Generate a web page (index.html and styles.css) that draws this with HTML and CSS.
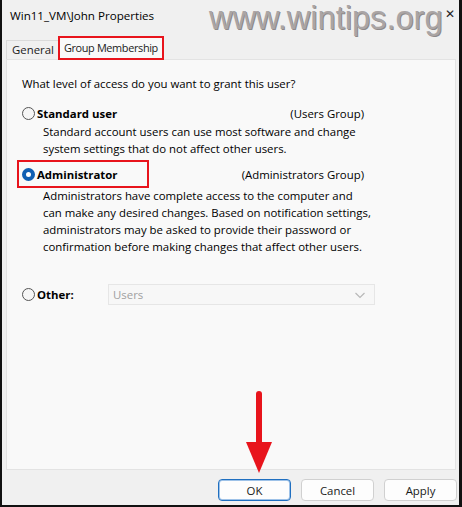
FILE: index.html
```html
<!DOCTYPE html>
<html lang="en">
  <head>
    <meta charset="UTF-8" />
    <title>Win11_VM\John Properties</title>
    <link rel="stylesheet" href="styles.css">
  </head>
  <body>
    <div class="vindue">
      <header class="titel">
        <span class="titeltekst">Win11_VM\John Properties</span>
        <span class="vandmaerke">www.wintips.org</span>
        <span class="luk">&#x2715;</span>
      </header>

      <nav class="faner">
        <span class="fane">General</span>
        <span class="fane aktiv markeret">Group Membership</span>
      </nav>

      <main class="panel">
        <p class="spoergsmaal">What level of access do you want to grant this user?</p>

        <div class="valg">
          <label class="linje">
            <span class="radio"></span>
            <b>Standard user</b>
            <span class="gruppe">(Users Group)</span>
          </label>
          <p class="beskrivelse">Standard account users can use most software and change<br>system settings that do not affect other users.</p>
        </div>

        <div class="valg admin">
          <label class="linje">
            <span class="markering">
              <span class="radio valgt"></span>
              <b>Administrator</b>
            </span>
            <span class="gruppe">(Administrators Group)</span>
          </label>
          <p class="beskrivelse">Administrators have complete access to the computer and<br>can make any desired changes. Based on notification settings,<br>administrators may be asked to provide their password or<br>confirmation before making changes that affect other users.</p>
        </div>

        <div class="valg andet">
          <label class="linje">
            <span class="radio"></span>
            <b>Other:</b>
          </label>
          <div class="vaelger">
            <span>Users</span>
            <svg width="12" height="8" viewBox="0 0 12 8"><path d="M1.5 2 L6 6.5 L10.5 2" fill="none" stroke="#b8b8b8" stroke-width="1.2"/></svg>
          </div>
        </div>
      </main>

      <footer class="knapper">
        <button class="standard">OK</button>
        <button>Cancel</button>
        <button>Apply</button>
      </footer>

      <!-- den roede pil ovenpaa OK -->
      <svg class="pil" width="30" height="84" viewBox="0 0 30 84">
        <path d="M15 3 L15 54" stroke="#e8141c" stroke-width="6" stroke-linecap="round"/>
        <path d="M2 51 L28 51 L15 82 Z" fill="#e8141c"/>
      </svg>
    </div>
  </body>
</html>
```

FILE: styles.css
```css
* {
  padding: 0;
  margin: 0;
  box-sizing: border-box;
}

body {
  background-color: #000;
  font-family: "Open Sans", "Noto Sans", sans-serif;
  font-size: 11.4px;
  color: #000;
}

.vindue {
  position: relative;
  width: 462px;
  height: 507px;
  background-color: #f0f0f0;
  border-left: 2px solid #111;
  border-right: 3px solid #111;
  border-bottom: 2px solid #111;
  display: flex;
  flex-direction: column;
  overflow: hidden;
}

/* titellinje */

.titel {
  height: 37px;
  display: flex;
  align-items: flex-start;
  padding-left: 8px;
  position: relative;
}

.titeltekst {
  margin-top: 8px;
  font-size: 11.6px;
}

.vandmaerke {
  position: absolute;
  left: 207px;
  top: 0;
  line-height: 36px;
  font-family: "Liberation Sans", Arial, sans-serif;
  font-size: 32.6px;
  color: #aaa5a5;
  text-shadow: 1px 1px 0 #8e8a8a;
}

.luk {
  position: absolute;
  right: 4px;
  top: 5px;
  font-size: 12px;
  color: #222;
}

/* faner */

.faner {
  display: flex;
  align-items: flex-end;
  padding-left: 4px;
  height: 22px;
  position: relative;
  z-index: 1;
}

.fane {
  padding: 0 5px;
  height: 19px;
  line-height: 18px;
  border: 1px solid #dadada;
  border-bottom: none;
  background-color: #f0f0f0;
  color: #1a1a1a;
}

.fane.aktiv {
  height: 22px;
  line-height: 19px;
  margin-left: -1px;
  background-color: #f9f9f9;
  padding: 0 4px 0 4px;
  font-size: 10.9px;
  letter-spacing: -0.35px;
}

.markeret {
  outline: 2px solid #e8141c;
  outline-offset: -1px;
}

/* panel */

.panel {
  margin: 0 3px 0 4px;
  height: 411px;
  background-color: #f9f9f9;
  border: 1px solid #e3e3e3;
  padding: 15px 0 0 15px;
  line-height: 17px;
}

.spoergsmaal {
  margin-bottom: 12px;
}

.valg {
  width: 344px;
}

.linje {
  display: flex;
  align-items: center;
  height: 18px;
}

.linje b {
  font-weight: 700;
  margin-left: 2px;
}

.radio {
  width: 13px;
  height: 13px;
  border-radius: 50%;
  border: 1px solid #555;
  background-color: #f6f6f6;
  display: inline-block;
}

.radio.valgt {
  border: 4px solid #0f5fb3;
  background-color: #fff;
}

.gruppe {
  margin-left: auto;
  margin-right: 2px;
}

.beskrivelse {
  padding-left: 21px;
  margin-top: 1px;
  white-space: nowrap;
}

.admin {
  margin-top: 8px;
}

.markering {
  display: flex;
  align-items: center;
  height: 26px;
  width: 130px;
  margin-left: -4px;
  padding-left: 4px;
  outline: 2px solid #e8141c;
  outline-offset: -1px;
}

.admin .beskrivelse {
  margin-top: 4px;
}

.andet {
  margin-top: 29px;
  display: flex;
  align-items: center;
  width: 353px;
}

.andet .linje {
  width: 86px;
}

.vaelger {
  flex: 1;
  height: 21px;
  border: 1px solid #e6e6e6;
  background-color: #f7f7f7;
  color: #a0a0a0;
  display: flex;
  align-items: center;
  justify-content: space-between;
  padding: 0 8px 0 4px;
}

/* knapper */

.knapper {
  display: flex;
  justify-content: flex-end;
  gap: 10px;
  padding: 9px 2px 0 0;
}

button {
  width: 73px;
  height: 22px;
  font-family: "Open Sans", "Noto Sans", sans-serif;
  font-size: 11.4px;
  background-color: #fdfdfd;
  border: 1px solid #d0d0d0;
  border-radius: 4px;
  color: #1a1a1a;
}

button.standard {
  border: 1px solid #1f6fc0;
  box-shadow: inset 0 0 0 1px #9ec2e8;
}

.pil {
  position: absolute;
  left: 242px;
  top: 391px;
}
```
